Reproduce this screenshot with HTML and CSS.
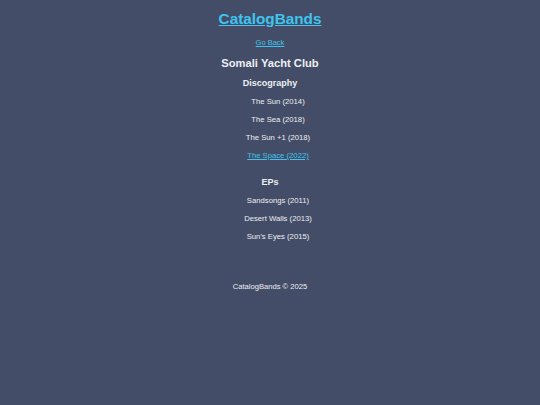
FILE: index.html
```html
<!DOCTYPE html>
<html>
<head>
<meta charset="utf-8">
<link rel="stylesheet" href="styles.css">
</head>
<body>
<header class="header">
  <a class="brand" href="#">CatalogBands</a>
</header>
<main class="main">
  <a class="back" href="#">Go Back</a>
  <h1 class="band">Somali Yacht Club</h1>
  <section class="group">
    <h2 class="group-title">Discography</h2>
    <ul class="list">
      <li>The Sun (2014)</li>
      <li>The Sea (2018)</li>
      <li>The Sun +1 (2018)</li>
      <li><a class="item-link" href="#">The Space (2022)</a></li>
    </ul>
  </section>
  <section class="group">
    <h2 class="group-title">EPs</h2>
    <ul class="list">
      <li>Sandsongs (2011)</li>
      <li>Desert Walls (2013)</li>
      <li>Sun's Eyes (2015)</li>
    </ul>
  </section>
</main>
<footer class="footer">CatalogBands © 2025</footer>
</body>
</html>
```
FILE: styles.css
```css
html, body {
  margin: 0;
  padding: 0;
}
body {
  background: #444d67;
  color: #eceef3;
  font-family: "Liberation Sans", Arial, sans-serif;
  text-align: center;
  min-height: 405px;
}
.header {
  padding-top: 9px;
}
.brand {
  color: #3fc4ee;
  font-size: 15.3px;
  font-weight: bold;
  line-height: 19px;
}
.main {
  display: flex;
  flex-direction: column;
  align-items: center;
  padding-top: 10px;
}
.back {
  color: #3fc4ee;
  font-size: 7.5px;
  line-height: 10px;
}
.band {
  margin: 9px 0 0;
  font-size: 11.2px;
  line-height: 13px;
}
.group {
  display: flex;
  flex-direction: column;
  align-items: center;
}
.group-title {
  margin: 8px 0 0;
  font-size: 9px;
  line-height: 11px;
}
.list {
  list-style: none;
  margin: 8px 0 0;
  padding: 0 0 0 16px;
  display: flex;
  flex-direction: column;
  align-items: center;
  gap: 8px;
  font-size: 7.7px;
  line-height: 10px;
}
.item-link {
  color: #3fc4ee;
}
.group + .group {
  margin-top: 8px;
}
.footer {
  margin-top: 40px;
  font-size: 7.6px;
  line-height: 10px;
}
```
